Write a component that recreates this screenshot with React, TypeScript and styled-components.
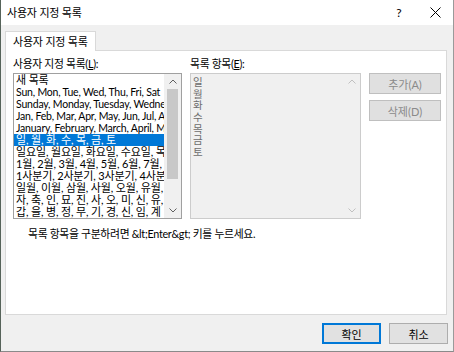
import React from 'react';
import styled, { createGlobalStyle } from 'styled-components';

const FONT = `Lato, "Noto Sans CJK KR", "Liberation Sans", sans-serif`;

const Global = createGlobalStyle`
  html, body { margin: 0; padding: 0; background: #f0f0f0; }
  body { font-family: ${FONT}; -webkit-font-smoothing: antialiased; }
  * { box-sizing: border-box; }
`;

const Window = styled.div`
  width: 454px;
  height: 352px;
  display: flex;
  flex-direction: column;
  background: #f0f0f0;
  border-left: 1px solid #56635a;
  border-right: 1px solid #9a9a9a;
  border-bottom: 1px solid #8a8a8a;
  font-family: ${FONT};
  color: #000;
  overflow: hidden;
`;

const TitleBar = styled.div`
  height: 25px;
  flex: none;
  display: flex;
  align-items: center;
  background: #ffffff;
  padding-left: 6px;
`;

const Title = styled.div`
  font-size: 11px;
  line-height: 14px;
  letter-spacing: -0.2px;
  flex: 1;
`;

const CaptionButton = styled.div`
  width: 36px;
  height: 25px;
  display: flex;
  align-items: center;
  justify-content: center;
  font-size: 12px;
  color: #000;
`;

const Body = styled.div`
  flex: 1;
  display: flex;
  flex-direction: column;
  padding: 6px 5px 0 4px;
`;

const Tab = styled.div`
  width: 91px;
  height: 20px;
  background: #fff;
  border: 1px solid #d9d9d9;
  border-bottom: none;
  margin-bottom: -1px;
  position: relative;
  z-index: 1;
  padding-left: 7px;
  font-size: 11px;
  letter-spacing: -0.2px;
  line-height: 20px;
`;

const Panel = styled.div`
  width: 442px;
  height: 265px;
  background: #fff;
  border: 1px solid #d9d9d9;
  padding: 7px 0 0 7px;
  display: grid;
  grid-template-columns: 169px 171px 72px;
  grid-template-rows: 12px 146px auto;
  column-gap: 8px;
  row-gap: 3px;
  align-content: start;
`;

const Label = styled.div`
  font-size: 10.8px;
  letter-spacing: -0.3px;
  line-height: 12px;
  white-space: nowrap;
`;

const ListBox = styled.div<{ $disabled?: boolean }>`
  height: 146px;
  border: 1px solid ${(p) => (p.$disabled ? '#cccccc' : '#a0a0a0')};
  background: ${(p) => (p.$disabled ? '#f0f0f0' : '#ffffff')};
  display: flex;
  overflow: hidden;
`;

const Items = styled.div`
  flex: 1;
  min-width: 0;
  overflow: hidden;
`;

const Item = styled.div<{ $selected?: boolean; $latin?: boolean }>`
  height: 12px;
  line-height: 12px;
  font-size: ${(p) => (p.$latin ? '10.5px' : '11px')};
  letter-spacing: ${(p) => (p.$latin ? '-0.2px' : '-0.15px')};
  padding-left: 2px;
  white-space: nowrap;
  overflow: hidden;
  background: ${(p) => (p.$selected ? '#0078d7' : 'transparent')};
  color: ${(p) => (p.$selected ? '#ffffff' : '#000000')};
`;

const EntryText = styled.div`
  flex: 1;
  padding: 3px 0 0 2px;
  font-size: 10.5px;
  line-height: 11.67px;
  color: #6d6d6d;
`;

const ScrollBar = styled.div`
  width: 17px;
  flex: none;
  display: flex;
  flex-direction: column;
  background: #f0f0f0;
`;

const ArrowBox = styled.div`
  height: 15px;
  flex: none;
  display: flex;
  align-items: center;
  justify-content: center;
`;

const Track = styled.div`
  flex: 1;
  display: flex;
  justify-content: center;
`;

const Thumb = styled.div`
  width: 11px;
  height: 90px;
  background: #c8c8c8;
`;

const ButtonColumn = styled.div`
  display: flex;
  flex-direction: column;
  gap: 6px;
`;

const Button = styled.div<{ $primary?: boolean; $disabled?: boolean; $w?: number }>`
  width: ${(p) => p.$w ?? 72}px;
  height: 21px;
  display: flex;
  align-items: center;
  justify-content: center;
  font-size: 11px;
  background: ${(p) => (p.$disabled ? '#e0e0e0' : '#e1e1e1')};
  border: ${(p) =>
    p.$primary ? '2px solid #0078d7' : p.$disabled ? '1px solid #bfbfbf' : '1px solid #adadad'};
  color: ${(p) => (p.$disabled ? '#8a8a8a' : '#000')};
`;

const Hint = styled.div`
  grid-column: 1 / -1;
  margin: 6px 0 0 15px;
  font-size: 10.8px;
  letter-spacing: -0.3px;
  line-height: 12px;
  white-space: nowrap;
`;

const Footer = styled.div`
  display: flex;
  justify-content: flex-end;
  gap: 8px;
  padding-top: 8px;
`;

const Chevron = ({ up, color }: { up?: boolean; color: string }) => (
  <svg width="8" height="5" viewBox="0 0 8 5">
    <polyline
      points={up ? '0.5,4.5 4,1 7.5,4.5' : '0.5,0.5 4,4 7.5,0.5'}
      fill="none"
      stroke={color}
      strokeWidth="1"
    />
  </svg>
);

const CloseIcon = () => (
  <svg width="11" height="11" viewBox="0 0 11 11">
    <path d="M0.5 0.5 L10.5 10.5 M10.5 0.5 L0.5 10.5" stroke="#000" strokeWidth="1" />
  </svg>
);

const lists: { text: string; latin?: boolean }[] = [
  { text: '새 목록' },
  { text: 'Sun, Mon, Tue, Wed, Thu, Fri, Sat', latin: true },
  { text: 'Sunday, Monday, Tuesday, Wednesday, Thursday, Friday, Saturday', latin: true },
  { text: 'Jan, Feb, Mar, Apr, May, Jun, Jul, Aug, Sep, Oct, Nov, Dec', latin: true },
  { text: 'January, February, March, April, May, June, July, August', latin: true },
  { text: '일, 월, 화, 수, 목, 금, 토' },
  { text: '일요일, 월요일, 화요일, 수요일, 목요일, 금요일, 토요일' },
  { text: '1월, 2월, 3월, 4월, 5월, 6월, 7월, 8월, 9월, 10월, 11월, 12월' },
  { text: '1사분기, 2사분기, 3사분기, 4사분기' },
  { text: '일월, 이월, 삼월, 사월, 오월, 유월, 칠월, 팔월, 구월, 시월' },
  { text: '자, 축, 인, 묘, 진, 사, 오, 미, 신, 유, 술, 해' },
  { text: '갑, 을, 병, 정, 무, 기, 경, 신, 임, 계' },
];

const entries = ['일', '월', '화', '수', '목', '금', '토'];

export default function App() {
  return (
    <>
      <Global />
      <Window>
        <TitleBar>
          <Title>사용자 지정 목록</Title>
          <CaptionButton>?</CaptionButton>
          <CaptionButton>
            <CloseIcon />
          </CaptionButton>
        </TitleBar>
        <Body>
          <Tab>사용자 지정 목록</Tab>
          <Panel>
            <Label>사용자 지정 목록(<u>L</u>):</Label>
            <Label>목록 항목(<u>E</u>):</Label>
            <div />
            <ListBox>
              <Items>
                {lists.map((l, i) => (
                  <Item key={i} $selected={i === 5} $latin={l.latin}>
                    {l.text}
                  </Item>
                ))}
              </Items>
              <ScrollBar>
                <ArrowBox>
                  <Chevron up color="#606060" />
                </ArrowBox>
                <Track>
                  <Thumb />
                </Track>
                <ArrowBox>
                  <Chevron color="#606060" />
                </ArrowBox>
              </ScrollBar>
            </ListBox>
            <ListBox $disabled>
              <EntryText>
                {entries.map((e) => (
                  <div key={e}>{e}</div>
                ))}
              </EntryText>
              <ScrollBar>
                <ArrowBox>
                  <Chevron up color="#c0c0c0" />
                </ArrowBox>
                <Track />
                <ArrowBox>
                  <Chevron color="#c0c0c0" />
                </ArrowBox>
              </ScrollBar>
            </ListBox>
            <ButtonColumn>
              <Button $disabled>추가(A)</Button>
              <Button $disabled>삭제(D)</Button>
            </ButtonColumn>
            <Hint>{'목록 항목을 구분하려면 &lt;Enter&gt; 키를 누르세요.'}</Hint>
          </Panel>
          <Footer>
            <Button $primary $w={59}>확인</Button>
            <Button $w={59}>취소</Button>
          </Footer>
        </Body>
      </Window>
    </>
  );
}
